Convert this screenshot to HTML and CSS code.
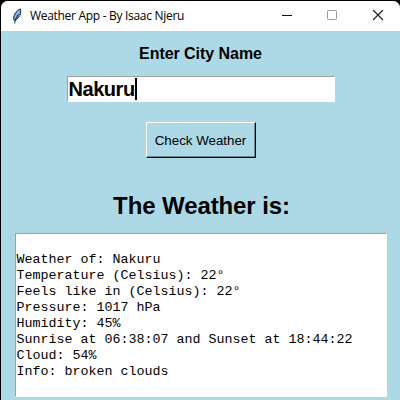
FILE: index.html
```
<!DOCTYPE html>
<html lang="en">
<head>
<meta charset="utf-8">
<title>Weather App - By Isaac Njeru</title>
<link rel="stylesheet" href="styles.css">
</head>
<body>
<main class="window">
  <header class="titlebar">
    <svg class="feather" width="10" height="17" viewBox="0 0 10 17">
      <path d="M8.500.9C5.500 1.600 2.600 5 1.800 9c-.3 1.500-.2 2.800.5 3.600C5 11.500 8 8.500 8.500 5.500 8.800 3.600 8.900 2 8.500.9Z" fill="#5b94d6" stroke="#1c222b" stroke-width=".9"/>
      <path d="M7.200 3C5.200 5.500 3.700 8 3.200 10.500" fill="none" stroke="#9cc8f2" stroke-width="1.300"/>
      <path d="M5.800 6.500C4.500 9 3 12 2.700 15.500" fill="none" stroke="#15191f" stroke-width=".9"/>
    </svg>
    <span class="title">Weather App - By Isaac Njeru</span>
    <svg class="controls" width="106" height="12" viewBox="0 0 106 12">
      <path d="M0 6.500H10" stroke="#111" fill="none"/>
      <rect x="45.500" y="1.500" width="9" height="9" rx=".8" stroke="#999" fill="none"/>
      <path d="M91 1 101 11M101 1 91 11" stroke="#222" stroke-width="1.200" fill="none"/>
    </svg>
  </header>
  <section class="content">
    <div class="label">Enter City Name</div>
    <div class="entry"><span class="value">Nakuru</span><span class="caret"></span></div>
    <button class="check">Check Weather</button>
    <h1 class="heading">The Weather is:</h1>
    <pre class="output">

Weather of: Nakuru
Temperature (Celsius): 22°
Feels like in (Celsius): 22°
Pressure: 1017 hPa
Humidity: 45%
Sunrise at 06:38:07 and Sunset at 18:44:22
Cloud: 54%
Info: broken clouds</pre>
  </section>
</main>
</body>
</html>
```
FILE: styles.css
```
* { box-sizing: border-box; }
body {
  margin: 0;
  width: 400px;
  height: 400px;
  overflow: hidden;
  background: #000;
  color: #000;
  font-family: "Liberation Sans", Arial, sans-serif;
}
.window {
  margin: 1px 0 0 1px;
  height: 399px;
  background: #add8e6;
  border-radius: 7px 7px 0 0;
  overflow: hidden;
}
.titlebar {
  display: flex;
  align-items: center;
  height: 30px;
  padding-left: 11px;
  background: #fff;
}
.feather { margin-right: 8px; }
.title {
  width: 155px;
  font: 12px/16px "Open Sans", "Noto Sans", sans-serif;
  letter-spacing: -0.3px;
  white-space: nowrap;
}
.controls { margin: 0 0 2px 97px; }
.content {
  display: flex;
  flex-direction: column;
  align-items: center;
  padding-top: 13px;
}
.label {
  font-size: 16px;
  font-weight: bold;
  line-height: 20px;
  letter-spacing: -0.05px;
}
.entry {
  display: flex;
  align-items: center;
  width: 268px;
  height: 26px;
  margin-top: 12px;
  padding-left: 1px;
  border: 1px solid #fff;
  border-top-color: #a0a0a0;
  border-left-color: #a0a0a0;
  background: #fff;
}
.value {
  font-size: 20px;
  font-weight: bold;
  letter-spacing: -0.45px;
}
.caret {
  width: 2px;
  height: 22px;
  background: #000;
}
.check {
  width: 110px;
  height: 36px;
  margin-top: 20px;
  padding: 0;
  border: 1px solid #000;
  border-top-color: #fff;
  border-left-color: #fff;
  border-radius: 0;
  box-shadow: inset -1px -1px #698b96;
  background: #add8e6;
  color: #000;
  font: 13.333px "Liberation Sans", Arial, sans-serif;
}
.heading {
  margin: 33px 0 0 2px;
  font-size: 24px;
  line-height: 30px;
  letter-spacing: -0.1px;
}
.output {
  width: 372px;
  height: 164px;
  margin: 12px 0 0;
  padding: 2px 1px 0 1px;
  border: 1px solid #fff;
  border-top-color: #a0a0a0;
  border-left-color: #a0a0a0;
  background: #fff;
  font: 13.333px/16px "Liberation Mono", "Courier New", monospace;
}
```
